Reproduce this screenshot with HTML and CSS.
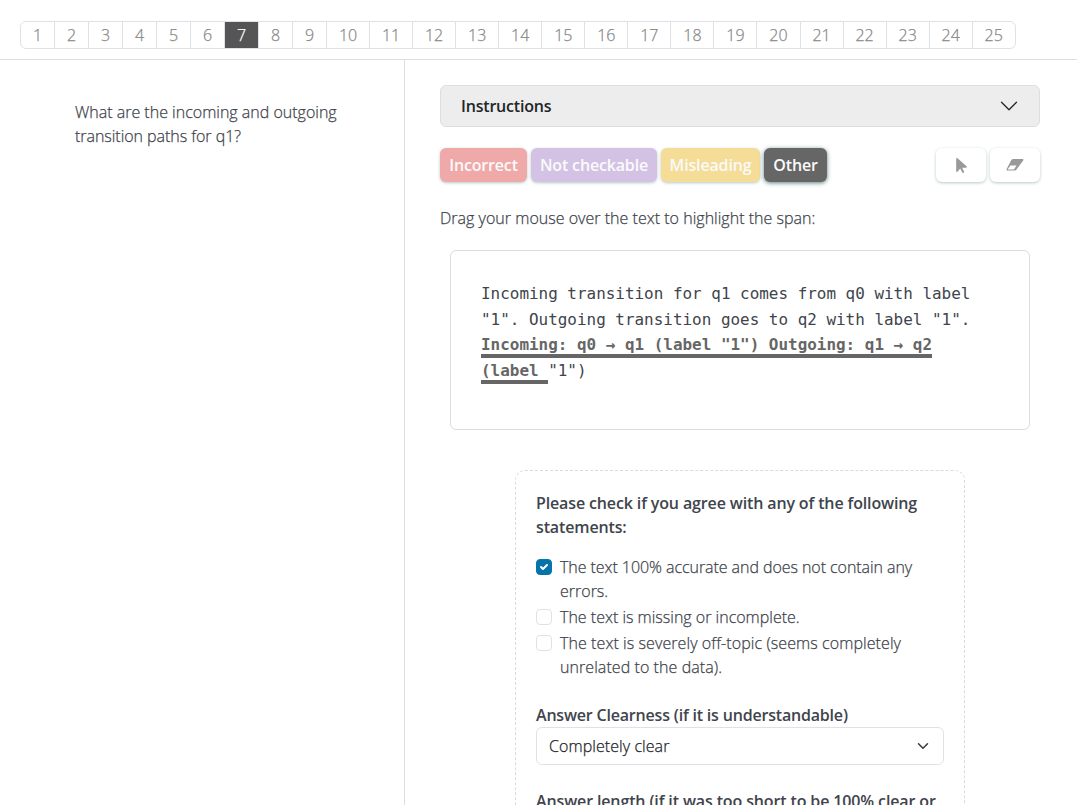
FILE: index.html
```html
<!DOCTYPE html>
<html lang="en">
<head>
<meta charset="utf-8">
<title>Annotation</title>
<link rel="stylesheet" href="styles.css">
</head>
<body>
<nav class="topbar">
  <ul class="pages">
    <li>1</li><li>2</li><li>3</li><li>4</li><li>5</li><li>6</li><li class="active">7</li><li>8</li><li>9</li>
    <li class="wide">10</li><li class="wide">11</li><li class="wide">12</li><li class="wide">13</li><li class="wide">14</li><li class="wide">15</li><li class="wide">16</li><li class="wide">17</li><li class="wide">18</li><li class="wide">19</li><li class="wide">20</li><li class="wide">21</li><li class="wide">22</li><li class="wide">23</li><li class="wide">24</li><li class="wide">25</li>
  </ul>
</nav>
<main class="panes">
  <section class="question"><span class="q-a">What are the incoming and outgoing</span><br><span class="q-b">transition paths for q1?</span></section>
  <section class="work">
    <div class="instructions">
      <b class="t-ins">Instructions</b>
      <svg width="20" height="20" viewBox="0 0 16 16" fill="none" stroke="#212529" stroke-width="1" stroke-linecap="round" stroke-linejoin="round"><path d="M2 5l6 6 6-6"/></svg>
    </div>
    <div class="tools">
      <button class="cat incorrect">Incorrect</button>
      <button class="cat uncheck">Not checkable</button>
      <button class="cat mislead">Misleading</button>
      <button class="cat other">Other</button>
      <button class="tool first" aria-label="Select"><svg width="11" height="17" viewBox="0 0 320 512" fill="#999"><path d="M0 55.200L0 426c0 12.200 9.900 22 22 22c6.300 0 12.400-2.700 16.600-7.500L121.200 346l58.100 116.300c7.900 15.800 27.100 22.200 42.900 14.300s22.200-27.100 14.300-42.900L179.800 320l118.100 0c12.200 0 22.100-9.900 22.100-22.100c0-6.300-2.700-12.300-7.400-16.500L38.600 37.900C34.300 34.100 28.900 32 23.200 32C10.400 32 0 42.400 0 55.200z"/></svg></button>
      <button class="tool" aria-label="Erase"><svg width="18" height="14" viewBox="0 0 18 14"><path fill="#999" d="M7.200 1h9.200c1 0 1.400.8.800 1.600l-6.700 9c-.5.600-1.100 1-1.900 1H1.500c-1 0-1.400-.8-.8-1.600L5.300 2c.5-.6 1.100-1 1.900-1z"/><path fill="#fff" d="M4.500 7.500h6.100L8.200 10.900c-.3.400-.6.500-1 .5H2.300c-.4 0-.5-.3-.3-.6z"/></svg></button>
    </div>
    <p class="hint">Drag your mouse over the text to highlight the span:</p>
    <div class="passage">Incoming transition for q1 comes from q0 with label<br>"1". Outgoing transition goes to q2 with label "1".<br><span class="mark">Incoming: q0 → q1 (label "1") Outgoing: q1 → q2</span><br><span class="mark">(label </span>"1")</div>
    <form class="survey">
      <div class="legend"><b class="s-a">Please check if you agree with any of the following</b><br><b class="s-b">statements:</b></div>
      <div class="check"><i class="box on"><svg width="14" height="14" viewBox="0 0 14 14" fill="none" stroke="#fff" stroke-width="2" stroke-linecap="round" stroke-linejoin="round"><path d="M4 7l2 2 4-4"/></svg></i><span><span class="c-a">The text 100% accurate and does not contain any</span><br><span class="c-b">errors.</span></span></div>
      <div class="check"><i class="box"></i><span class="c-c">The text is missing or incomplete.</span></div>
      <div class="check"><i class="box"></i><span><span class="c-d">The text is severely off-topic (seems completely</span><br><span class="c-e">unrelated to the data).</span></span></div>
      <div class="field"><b class="f-a">Answer Clearness (if it is understandable)</b>
        <div class="select"><span class="f-b">Completely clear</span><svg width="16" height="12" viewBox="0 0 16 16" fill="none" stroke="#343a40" stroke-width="2" stroke-linecap="round" stroke-linejoin="round"><path d="M2 5l6 6 6-6"/></svg></div>
      </div>
      <div class="field"><b class="f-c">Answer length (if it was too short to be 100% clear or</b></div>
    </form>
  </section>
</main>
</body>
</html>
```
FILE: styles.css
```css
* { box-sizing: border-box; }
body { margin: 0; height: 805px; overflow: hidden; display: flex; flex-direction: column; background: #fff; color: #40444c; font: 300 16px/24px "Open Sans", sans-serif; white-space: nowrap; -webkit-text-stroke: 0.250px; }
b, button, .passage { -webkit-text-stroke: 0; }
b { font-weight: 600; }
.topbar { height: 60px; padding: 21px 20px 0; border-bottom: 1px solid #dcdee0; flex: none; }
.pages { display: inline-flex; margin: 0; padding: 0; list-style: none; height: 28px; border: 1px solid #dee2e6; border-radius: 6px; overflow: hidden; vertical-align: top; color: #888; }
.pages li { width: 34px; line-height: 27px; text-align: center; border-left: 1px solid #dee2e6; }
.pages li:first-child { width: 33px; border-left: 0; }
.pages .wide { width: 43.060px; }
.pages .active { background: #555; color: #fff; }
.panes { flex: 1; display: grid; grid-template-columns: 405px 1fr; min-height: 0; }
.question { border-right: 1px solid #dcdee0; padding: 40px 0 0 75px; }
.work { padding: 25px 37px 0 35px; min-width: 0; overflow: hidden; }
.instructions { height: 42px; display: flex; align-items: center; justify-content: space-between; padding: 0 20px; border: 1px solid #dcdee0; border-radius: 6px; background: #ededed; color: #212529; }
.tools { display: flex; gap: 4px; margin-top: 21px; height: 34px; }
.tools button { border: 0; border-radius: 6px; padding: 0; font: 600 16px/34px "Open Sans", sans-serif; letter-spacing: -0.160px; color: #fafafa; box-shadow: 0 1px 3px #7f9f9f90; flex: none; }
.tools .incorrect { width: 87px; background: #efa9a9; }
.tools .uncheck { width: 126px; background: #d4c2e5; }
.tools .mislead { width: 99px; background: #f5dc97; }
.tools .other { width: 63px; background: #666; box-shadow: 0 1px 4px #2f5555c0; }
.tools .tool { width: 50px; background: #fff; display: grid; place-items: center; }
.tools .first { margin-left: auto; }
.hint { margin: 24px 0 20px; letter-spacing: 0.020px; }
.passage { margin: 0 10px; height: 180px; padding: 30px 30px; border: 1px solid #dcdcdc; border-radius: 6px; font: 400 15.950px/25.600px "DejaVu Sans Mono", monospace; white-space: pre; }
.mark { color: #666; font-weight: 700; border-bottom: 4px solid #666; }
.survey { width: 450px; margin: 40px auto 0; padding: 20px; height: 420px; border: 1px dashed #d9dbdd; border-radius: 10px; }
.legend { margin-bottom: 16px; }
.check { display: flex; gap: 8px; margin-bottom: 2px; }
.box { width: 16px; height: 16px; margin-top: 4px; border: 1px solid #dee2e6; border-radius: 4px; display: grid; place-items: center; flex: none; }
.box.on { background: #0674ab; border-color: #0674ab; }
.field { margin: 24px 0; }
.field b { display: inline-block; vertical-align: top; }
.select { height: 38px; padding: 0 12px; display: flex; align-items: center; justify-content: space-between; border: 1px solid #dee2e6; border-radius: 6px; color: #212529; }
.t-ins, .f-a { letter-spacing: -0.190px; }
.s-a, .s-b { letter-spacing: -0.135px; }
.f-c { letter-spacing: -0.130px; }
.c-a { letter-spacing: -0.060px; }
.c-d { letter-spacing: 0.080px; }
.c-e, .f-b { letter-spacing: 0.070px; }
.q-b { letter-spacing: -0.040px; }
```
